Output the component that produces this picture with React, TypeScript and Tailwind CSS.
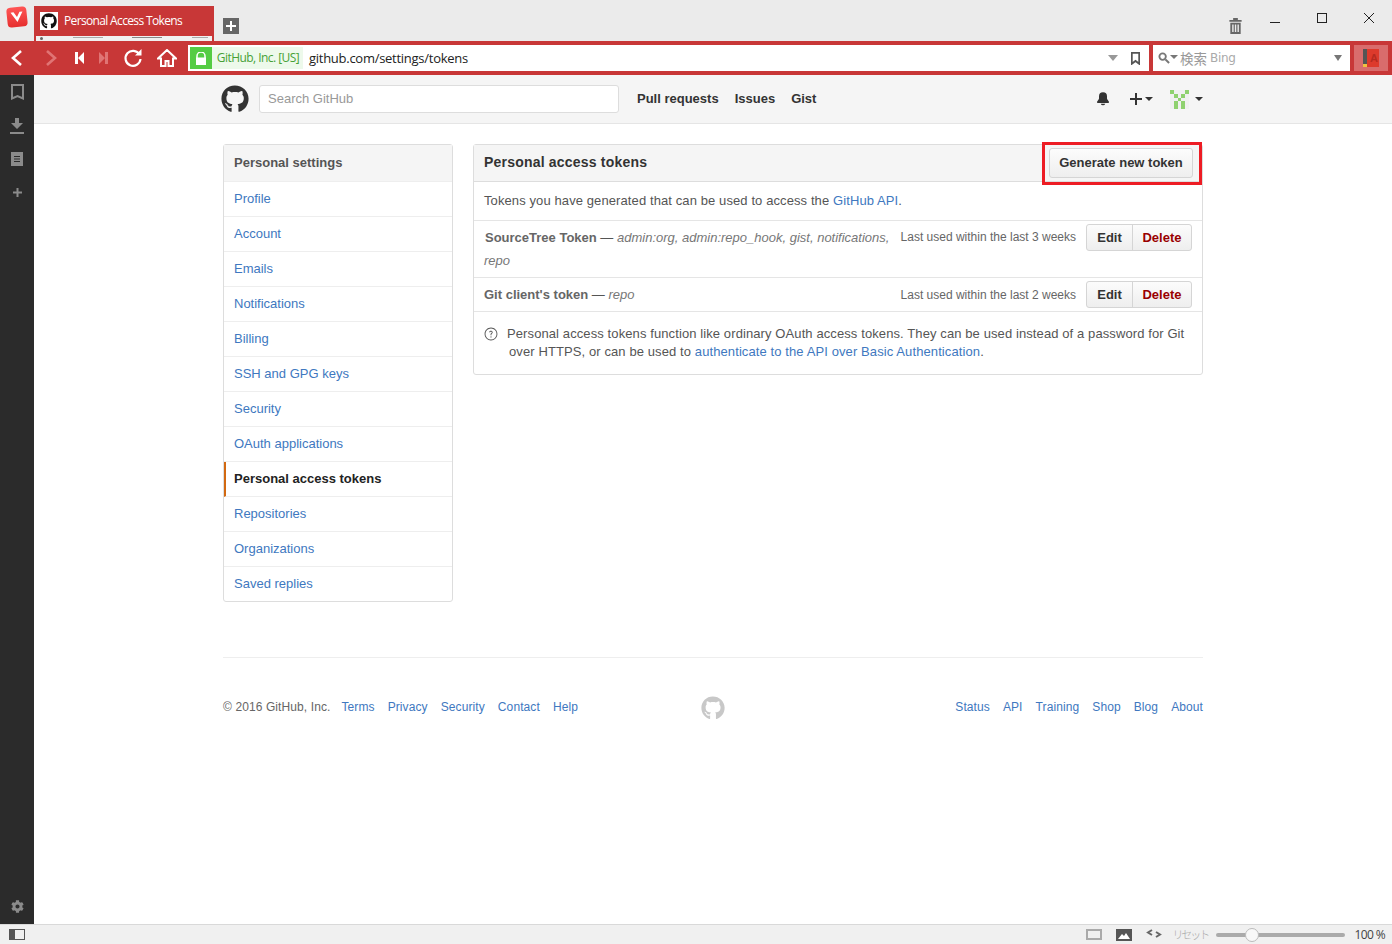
import React from "react";
import { GoBellFill, GoQuestion } from "react-icons/go";
import { FaCog, FaGithub } from "react-icons/fa";

const menuItems = ["Profile", "Account", "Emails", "Notifications", "Billing", "SSH and GPG keys", "Security", "OAuth applications", "Personal access tokens", "Repositories", "Organizations", "Saved replies"];
const footerLeft = ["Terms", "Privacy", "Security", "Contact", "Help"];
const footerRight = ["Status", "API", "Training", "Shop", "Blog", "About"];

function Caret({ className = "" }: { className?: string }) {
  return <span className={`inline-block h-0 w-0 border-x-[4px] border-t-[4px] border-x-transparent ${className}`} />;
}

function TitleBar() {
  return (
    <div className="relative flex h-[41px] shrink-0 items-end bg-[#ebebeb]">
      {/* Vivaldi logo */}
      <div className="mb-[14px] ml-[7px] flex h-[20px] w-[20px] -rotate-6 items-center justify-center rounded-[4px] bg-gradient-to-b from-[#f55] to-[#e62e2e]">
        <svg width="14" height="12" viewBox="0 0 14 12">
          <path d="M1 1 L7 11 L13 1 L10 1 L7 6 L4 1 Z" fill="#fff" />
        </svg>
      </div>
      {/* Tab */}
      <div className="ml-[7px] flex h-[35px] w-[180px] flex-col bg-[#c83737]">
        <div className="flex h-[30px] items-center pl-[6px]">
          <div className="flex h-[18px] w-[18px] items-center justify-center bg-white">
            <FaGithub className="h-[16px] w-[16px] text-[#111]" />
          </div>
          <span className="ml-[6px] font-['Open_Sans'] text-[12px] tracking-[-0.65px] text-white">Personal Access Tokens</span>
        </div>
        <div className="mx-[2px] flex h-[5px] items-start justify-between bg-[#f0f0f0] px-[4px] pt-[1px]">
          <div className="h-[3px] w-[3px] rounded-full bg-[#666]" />
          <div className="h-[1px] w-[30px] bg-[#aaa]" />
          <div className="h-[1px] w-[30px] bg-[#888]" />
          <div className="h-[1px] w-[16px] bg-[#aaa]" />
        </div>
      </div>
      <div className="mb-[7px] ml-[9px] flex h-[16px] w-[16px] items-center justify-center bg-[#666] text-white">
        <svg width="12" height="12" viewBox="0 0 12 12">
          <path d="M5 1h2v4h4v2H7v4H5V7H1V5h4z" fill="#fff" />
        </svg>
      </div>
      <div className="flex-1" />
      {/* Trash + window controls */}
      <svg className="mb-[7px] mr-[28px]" width="13" height="16" viewBox="0 0 13 17">
        <path d="M4 0h5v2h4v2H0V2h4zM1 5h11v12H1zM3 7v8h1.5V7zM5.8 7v8h1.5V7zM8.6 7v8h1.500V7z" fill="#666" fillRule="evenodd" />
      </svg>
      <div className="mb-[18px] mr-[37px] h-[1px] w-[10px] bg-[#222]" />
      <div className="mb-[18px] mr-[37px] h-[10px] w-[10px] border border-[#222]" />
      <svg className="mb-[18px] mr-[18px]" width="10" height="10" viewBox="0 0 10 10">
        <path d="M0 0L10 10M10 0L0 10" stroke="#222" strokeWidth="1" />
      </svg>
    </div>
  );
}

function Toolbar() {
  return (
    <div className="flex h-[34px] shrink-0 items-center bg-[#c83737] pl-[10px]">
      <svg width="14" height="18" viewBox="0 0 14 18" className="mr-[20px]">
        <path d="M11 2L3 9L11 16" fill="none" stroke="#fff" strokeWidth="2.6" />
      </svg>
      <svg width="14" height="18" viewBox="0 0 14 18" className="mr-[17px]">
        <path d="M3 2L11 9L3 16" fill="none" stroke="#e07474" strokeWidth="2.6" />
      </svg>
      <svg width="10" height="12" viewBox="0 0 10 12" className="mr-[13px]">
        <path d="M0 0h3v12H0zM3 6L9 0v12z" fill="#fff" />
      </svg>
      <svg width="10" height="12" viewBox="0 0 10 12" className="mr-[15px]">
        <path d="M10 0H7v12h3zM7 6L1 0v12z" fill="#e07474" />
      </svg>
      <svg width="20" height="20" viewBox="0 0 20 20" className="mr-[14px]">
        <path d="M16.500 6.500A7.500 7.500 0 1 0 17.500 11" fill="none" stroke="#fff" strokeWidth="2.200" />
        <path d="M12 7.500h6.500V1z" fill="#fff" />
      </svg>
      <svg width="20" height="18" viewBox="0 0 20 18" className="mr-[11px]">
        <path d="M10 1L1 9.500h3V17h4.500v-5h3v5H16V9.500h3z" fill="none" stroke="#fff" strokeWidth="2" />
      </svg>
      {/* Address field */}
      <div className="flex h-[26px] w-[961px] items-center bg-white pl-[2px] pr-[9px]">
        <div className="flex h-[22px] w-[22px] items-center justify-center bg-[#55cc44]">
          <svg width="12" height="13" viewBox="0 0 12 13">
            <path d="M2 6V4a4 4 0 0 1 8 0v2" fill="none" stroke="#fff" strokeWidth="1.500" />
            <rect x="1" y="5.500" width="10" height="7.500" fill="#fff" />
          </svg>
        </div>
        <div className="flex h-[22px] w-[91px] items-center justify-center bg-[#edf9eb] pl-[1px] font-['Open_Sans'] text-[12px] tracking-[-0.55px] text-[#46a136]">GitHub, Inc. [US]</div>
        <span className="ml-[6px] pt-[1px] font-['Open_Sans'] text-[13px] tracking-[-0.27px] text-[#222]">github.com/settings/tokens</span>
        <div className="flex-1" />
        <Caret className="mr-[13px] border-x-[5px] border-t-[6px] border-t-[#999]" />
        <svg width="9" height="13" viewBox="0 0 9 13">
          <path d="M0.800 0.800h7.400v11L4.500 9l-3.700 2.800z" fill="none" stroke="#555" strokeWidth="1.800" />
        </svg>
      </div>
      {/* Search field */}
      <div className="ml-[4px] flex h-[26px] w-[197px] items-center bg-white pl-[5px] pr-[8px]">
        <svg width="12" height="12" viewBox="0 0 13 13">
          <circle cx="5" cy="5" r="3.500" fill="none" stroke="#777" strokeWidth="2" />
          <path d="M8 8l4 4" stroke="#777" strokeWidth="2.200" />
        </svg>
        <Caret className="mb-[3px] border-x-[2.500px] border-t-[4px] border-t-[#777]" />
        <span className="ml-[2px] font-['Noto_Sans_CJK_JP',sans-serif] text-[13.5px] text-[#999]">検索</span>
        <span className="ml-[3px] font-['DejaVu_Sans'] text-[12px] tracking-[-0.3px] text-[#aaa]">Bing</span>
        <div className="flex-1" />
        <Caret className="border-x-[4px] border-t-[6px] border-t-[#777]" />
      </div>
      {/* Extension button */}
      <div className="ml-[4px] flex h-[26px] w-[34px] items-center justify-center bg-[#d96c6c]">
        <div className="relative flex h-[18px] w-[16px] items-center justify-end bg-[#dd3a2c]">
          <div className="absolute bottom-0 left-0 top-0 w-[4px] bg-[#555]" />
          <div className="absolute bottom-0 left-0 h-[3px] w-[4px] bg-[#f0c040]" />
          <span className="pr-[1px] font-['Liberation_Sans'] text-[11px] font-bold text-[#b52a20]">A</span>
        </div>
      </div>
    </div>
  );
}

function SidePanel() {
  return (
    <div className="flex w-[34px] shrink-0 flex-col items-center justify-between bg-[#2b2b2b] pb-[11px] pt-[9px]">
      <div className="flex flex-col items-center">
        <svg width="13" height="16" viewBox="0 0 13 16" className="mb-[18px]">
          <path d="M1 1h11v13.500L6.500 12 1 14.500z" fill="none" stroke="#8b8b8b" strokeWidth="2" />
        </svg>
        <svg width="14" height="16" viewBox="0 0 14 16" className="mb-[18px]">
          <path d="M5 0h4v5h4L7 11 1 5h4zM0 14h14v2H0z" fill="#8b8b8b" />
        </svg>
        <svg width="12" height="14" viewBox="0 0 12 14" className="mb-[22px]">
          <path d="M0 0h12v14H0zM3 4v1h6V4zM3 6.500v1h6v-1zM3 9v1h6V9z" fill="#8b8b8b" fillRule="evenodd" />
        </svg>
        <svg width="9" height="9" viewBox="0 0 9 9">
          <path d="M3.500 0h2v3.500H9v2H5.500V9h-2V5.500H0v-2h3.500z" fill="#8b8b8b" />
        </svg>
      </div>
      <FaCog className="h-[13px] w-[13px] text-[#8b8b8b]" />
    </div>
  );
}

function GitHubHeader() {
  return (
    <div className="h-[49px] shrink-0 border-b border-[#e5e5e5] bg-[#f5f5f5]">
      <div className="mx-auto flex h-[48px] w-[980px] items-center font-['Liberation_Sans',sans-serif]">
        <FaGithub className="ml-[-2px] h-[28px] w-[28px] text-[#333]" />
        <div className="ml-[10px] flex h-[28px] w-[360px] items-center rounded-[3px] border border-[#ddd] bg-white pl-[8px] text-[13px] text-[#999]">Search GitHub</div>
        <div className="ml-[18px] flex gap-[16px] text-[13px] font-bold text-[#333]">
          <span>Pull requests</span>
          <span>Issues</span>
          <span>Gist</span>
        </div>
        <div className="flex-1" />
        <GoBellFill className="h-[16px] w-[16px] text-[#333]" />
        <svg width="12" height="12" viewBox="0 0 12 12" className="ml-[19px]">
          <path d="M5 0h2v5h5v2H7v5H5V7H0V5h5z" fill="#333" />
        </svg>
        <Caret className="ml-[3px] border-t-[#333]" />
        <svg width="19" height="19" viewBox="0 0 5 5" className="ml-[17px]" shapeRendering="crispEdges">
          <rect width="5" height="5" fill="#f0f0f0" />
          <path d="M0 0h1v1H0zM4 0h1v1H4zM1 1h1v1H1zM3 1h1v1H3zM2 2h1v1H2zM1 3h1v2H1zM3 3h1v2H3z" fill="#8fd16f" />
        </svg>
        <Caret className="ml-[6px] border-t-[#333]" />
      </div>
    </div>
  );
}

function SettingsMenu() {
  return (
    <div className="w-[230px] shrink-0 self-start rounded-[3px] border border-[#ddd] text-[13px]">
      <div className="flex h-[37px] items-center border-b border-[#eee] bg-[#f5f5f5] pl-[10px] font-bold text-[#555]">Personal settings</div>
      {menuItems.map((item, i) => {
        const active = item === "Personal access tokens";
        const last = i === menuItems.length - 1;
        return (
          <div key={item} className={`flex items-center ${last ? "h-[34px]" : "h-[35px] border-b border-[#eee]"} ${active ? "border-l-2 border-l-[#d26911] pl-[8px] font-bold text-[#222]" : "pl-[10px] text-[#4078c0]"}`}>
            {item}
          </div>
        );
      })}
    </div>
  );
}

function TokenActions() {
  return (
    <div className="ml-[10px] flex h-[27px] shrink-0 rounded-[3px] border border-[#d5d5d5] bg-gradient-to-b from-[#fcfcfc] to-[#eee] text-[13px] font-bold tracking-normal">
      <span className="flex w-[46px] items-center justify-center border-r border-[#d5d5d5] text-[#333]">Edit</span>
      <span className="flex w-[58px] items-center justify-center text-[#900]">Delete</span>
    </div>
  );
}

function TokensPanel() {
  return (
    <div className="w-[730px] shrink-0 self-start rounded-[3px] border border-[#ddd] text-[13px] tracking-[0.1px] text-[#555]">
      <div className="relative flex h-[37px] items-center justify-between border-b border-[#ddd] bg-[#f5f5f5] pl-[10px] pr-[9px]">
        <span className="mb-[1px] text-[14px] font-bold tracking-[0.2px] text-[#333]">Personal access tokens</span>
        <div className="flex h-[30px] w-[144px] items-center justify-center rounded-[3px] border border-[#d5d5d5] bg-gradient-to-b from-[#fcfcfc] to-[#eee] font-bold tracking-normal text-[#333]">Generate new token</div>
        {/* annotation box */}
        <div className="absolute right-[0px] top-[-3px] h-[43px] w-[160px] border-[3px] border-[#ed1c24]" />
      </div>
      <div className="flex h-[39px] items-center border-b border-[#e5e5e5] px-[10px]">
        <span>
          Tokens you have generated that can be used to access the <span className="text-[#4078c0]">GitHub API</span>.
        </span>
      </div>
      <div className="flex h-[57px] items-start border-b border-[#e5e5e5] pl-[11px] pr-[10px] pt-[3px]">
        <div className="min-w-0 flex-1 pt-[2px] leading-[23px] tracking-normal">
          <div className="flex justify-between">
            <span className="whitespace-nowrap">
              <b className="text-[#666]">SourceTree Token</b> — <em className="text-[#777]">admin:org, admin:repo_hook, gist, notifications,</em>
            </span>
            <span className="whitespace-nowrap text-[12px] text-[#666]">Last used within the last 3 weeks</span>
          </div>
          <em className="ml-[-1px] text-[#777]">repo</em>
        </div>
        <TokenActions />
      </div>
      <div className="flex h-[34px] items-center border-b border-[#e5e5e5] pl-[10px] pr-[10px] tracking-normal">
        <span className="flex-1">
          <b className="text-[#666]">Git client's token</b> — <em className="text-[#777]">repo</em>
        </span>
        <span className="whitespace-nowrap text-[12px] text-[#666]">Last used within the last 2 weeks</span>
        <TokenActions />
      </div>
      <div className="px-[10px] pb-[13px] pt-[13px] leading-[18px]">
        <div className="flex items-center">
          <GoQuestion className="mr-[9px] h-[14px] w-[14px] shrink-0 text-[#555]" />
          <span className="whitespace-nowrap">Personal access tokens function like ordinary OAuth access tokens. They can be used instead of a password for Git</span>
        </div>
        <div className="pl-[25px]">
          over HTTPS, or can be used to <span className="text-[#4078c0]">authenticate to the API over Basic Authentication</span>.
        </div>
      </div>
    </div>
  );
}

function Footer() {
  return (
    <div className="mt-[55px] grid grid-cols-[1fr_auto_1fr] items-center border-t border-[#eee] pt-[38px] text-[12px] tracking-[0.1px]">
      <div className="mb-[2px] flex items-center whitespace-nowrap text-[#666]">
        <span className="mr-[11px]">© 2016 GitHub, Inc.</span>
        <div className="flex gap-[13px] text-[#4078c0]">
          {footerLeft.map((l) => (
            <span key={l}>{l}</span>
          ))}
        </div>
      </div>
      <FaGithub className="h-[24px] w-[24px] text-[#c8c8c8]" />
      <div className="mb-[2px] flex justify-end gap-[13px] text-[#4078c0]">
        {footerRight.map((l) => (
          <span key={l}>{l}</span>
        ))}
      </div>
    </div>
  );
}

function StatusBar() {
  return (
    <div className="flex h-[20px] shrink-0 items-center border-t border-[#d9d9d9] bg-[#f0f0f0] pl-[9px] pr-[7px]">
      <div className="h-[11px] w-[16px] border border-[#555] border-l-[6px]" />
      <div className="flex-1" />
      <div className="h-[11px] w-[16px] border-2 border-[#aaa]" />
      <svg width="16" height="12" viewBox="0 0 16 12" className="ml-[14px]">
        <rect width="16" height="12" fill="#555" />
        <path d="M2 10L6 5l2 2 2-3 4 6z" fill="#fff" />
      </svg>
      <svg width="16" height="9" viewBox="0 0 16 9" className="mb-[2px] ml-[14px]">
        <path d="M6 1L2 3.500 6 6M10 3l4 2.500L10 8" fill="none" stroke="#666" strokeWidth="2" />
      </svg>
      <span className="ml-[10px] font-['Noto_Sans_CJK_JP',sans-serif] text-[11px] font-light tracking-[-2px] text-[#aaa]">リセット</span>
      <div className="relative ml-[8px] h-[4px] w-[129px] rounded-full bg-[#aaa]">
        <div className="absolute left-[29px] top-[-5px] h-[14px] w-[14px] rounded-full border border-[#bbb] bg-[#f8f8f8]" />
      </div>
      <span className="ml-[9px] font-['Open_Sans'] text-[12px] tracking-[-0.6px] text-[#444]">100 %</span>
    </div>
  );
}

export default function App() {
  return (
    <div className="flex h-[944px] w-[1392px] flex-col overflow-hidden bg-white font-['Liberation_Sans',sans-serif]">
      <TitleBar />
      <Toolbar />
      <div className="flex min-h-0 flex-1">
        <SidePanel />
        <div className="flex min-w-0 flex-1 flex-col">
          <GitHubHeader />
          <div className="mx-auto w-[980px] pt-[20px]">
            <div className="flex gap-[20px]">
              <SettingsMenu />
              <TokensPanel />
            </div>
            <Footer />
          </div>
        </div>
      </div>
      <StatusBar />
    </div>
  );
}
